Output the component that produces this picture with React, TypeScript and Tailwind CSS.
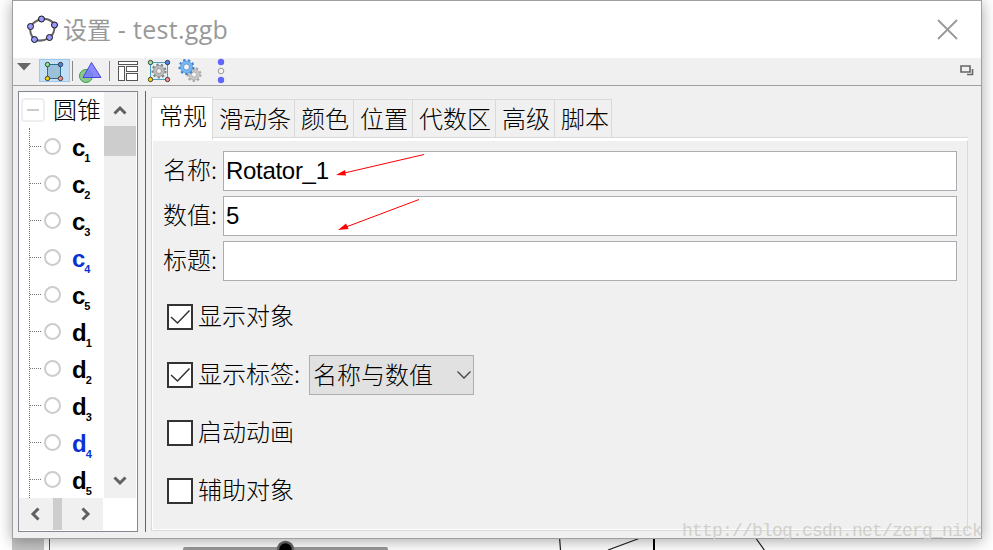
import React from 'react';

const treeItems = [
  { name: 'c', sub: '1' },
  { name: 'c', sub: '2' },
  { name: 'c', sub: '3' },
  { name: 'c', sub: '4', blue: true },
  { name: 'c', sub: '5' },
  { name: 'd', sub: '1' },
  { name: 'd', sub: '2' },
  { name: 'd', sub: '3' },
  { name: 'd', sub: '4', blue: true },
  { name: 'd', sub: '5' },
];

const tabs = [
  { label: '滑动条', width: 'w-[82px]' },
  { label: '颜色', width: 'w-[59px]' },
  { label: '位置', width: 'w-[59px]' },
  { label: '代数区', width: 'w-[83px]' },
  { label: '高级', width: 'w-[59px]' },
  { label: '脚本', width: 'w-[57px]' },
];

const fields = [
  { label: '名称', value: 'Rotator_1' },
  { label: '数值', value: '5' },
  { label: '标题', value: '' },
];

function Logo() {
  const points = [[16.5, 6], [29.5, 12], [24.5, 24.5], [9.5, 26.5], [5.5, 13.5]];
  return (
    <svg width="34" height="34" viewBox="0 0 34 34">
      <path d="M16.500 6Q26 5 29.500 12Q30 21 24.500 24.500Q17 29.500 9.500 26.500Q4 21 5.500 13.500Q9 8 16.500 6z" fill="none" stroke="#666" strokeWidth="2" />
      {points.map(([x, y]) => (
        <circle key={x} cx={x} cy={y} r="3" fill="#9999ff" stroke="#111" />
      ))}
    </svg>
  );
}

function Gear({ x, y, r, fill, stroke }: { x: number; y: number; r: number; fill: string; stroke: string }) {
  const step = (Math.PI * (r - 1)) / 9;
  return (
    <g>
      <circle cx={x} cy={y} r={r - 1} fill="none" stroke={stroke} strokeWidth="2" strokeDasharray={`${step} ${step}`} />
      <circle cx={x} cy={y} r={r - 2} fill={fill} stroke={stroke} strokeWidth="0.600" />
      <circle cx={x} cy={y} r={r - 5} fill="#f4f4f4" stroke={stroke} strokeWidth="0.700" />
    </g>
  );
}

function ToolbarIcons() {
  return (
    <svg width="217" height="27" viewBox="13 58 217 27">
      <path d="M17 63h14l-7 7.500z" fill="#666" />
      <rect x="39.500" y="59.500" width="30" height="22" fill="#c4dff5" stroke="#99caf0" />
      <rect x="47.500" y="64.500" width="13" height="14" fill="#9bc2d9" stroke="#2a6f94" />
      <g stroke="#333" strokeWidth="0.900">
        <circle cx="47.500" cy="64.500" r="2.200" fill="#8ee88e" />
        <circle cx="60.500" cy="64.500" r="2.200" fill="#4d84e8" />
        <circle cx="47.500" cy="78.500" r="2.200" fill="#ffd000" />
        <circle cx="60.500" cy="78.500" r="2.200" fill="#ff8c8c" />
      </g>
      <path d="M72.500 61v20M109.500 61v20" stroke="#888" />
      <circle cx="86" cy="76" r="6.500" fill="#8cc88c" stroke="#3c9a4c" />
      <path d="M91.500 62.500L101 77.500H83z" fill="#7878ff" fillOpacity="0.850" stroke="#4646e6" />
      <g fill="#fff" stroke="#555">
        <rect x="118.500" y="61.500" width="19" height="3" />
        <rect x="118.500" y="66.500" width="6" height="14" />
        <rect x="126.500" y="66.500" width="11" height="5" />
        <rect x="126.500" y="73.500" width="11" height="7" />
      </g>
      <rect x="150.500" y="62.500" width="17" height="17" fill="#e4f0f5" stroke="#4e9fc4" />
      <Gear x={159} y={71} r={7.500} fill="#bdbdbd" stroke="#808080" />
      <g stroke="#333" strokeWidth="0.900">
        <circle cx="150.500" cy="62.500" r="2.200" fill="#8ee88e" />
        <circle cx="167.500" cy="62.500" r="2.200" fill="#4d84e8" />
        <circle cx="150.500" cy="79.500" r="2.200" fill="#ffd000" />
        <circle cx="167.500" cy="79.500" r="2.200" fill="#ff8c8c" />
      </g>
      <Gear x={194} y={74.500} r={7.500} fill="#c8c8c8" stroke="#a4a4a4" />
      <Gear x={186.500} y={67} r={8} fill="#78b8f4" stroke="#3c82cc" />
      <circle cx="221" cy="62" r="3.200" fill="#6464ff" />
      <circle cx="221" cy="71" r="2.800" fill="#f4f4f4" stroke="#999" />
      <circle cx="221" cy="80" r="3.200" fill="#6464ff" />
    </svg>
  );
}

function Chevron({ d }: { d: string }) {
  return (
    <svg width="14" height="14" viewBox="0 0 14 14" fill="none" stroke="#606060" strokeWidth="3">
      <path d={d} />
    </svg>
  );
}

function Checkbox({ checked = false }: { checked?: boolean }) {
  return (
    <span className="mr-[5px] flex size-[26px] shrink-0 items-center justify-center border-2 border-[#333] bg-white">
      {checked && (
        <svg width="22" height="22" viewBox="0 0 22 22" fill="none" stroke="#333" strokeWidth="1.500">
          <path d="M2 11l6.500 6L20.500 4.500" />
        </svg>
      )}
    </span>
  );
}

// Part of the drawing pad that stays visible below the dialog
function CanvasBackground() {
  return (
    <svg className="absolute inset-0" width="993" height="550" viewBox="0 0 993 550">
      <rect x="12" y="530" width="32" height="20" fill="#c6c6c6" />
      <path d="M49.500 0v550" stroke="#555" />
      <rect x="183" y="547" width="205" height="8" rx="2" fill="#999" />
      <circle cx="285.500" cy="549.500" r="7.500" fill="#000" stroke="#666" strokeWidth="2.500" />
      <g stroke="#222" strokeWidth="1.200">
        <path d="M559.500 537l1 13M643 537l-35 13M755 537l10 14" />
        <path d="M654 537v13" stroke="#000" strokeWidth="2" />
      </g>
    </svg>
  );
}

function ObjectTree() {
  return (
    <div className="flex h-[441px] w-[120px] flex-col border border-[#828790] bg-white">
      <div className="flex h-[406px]">
        <div className="w-[85px] overflow-hidden">
          <div className="flex h-9 items-center pl-[2px]">
            <span className="flex size-6 items-center justify-center rounded border-2 border-[#eee]">
              <span className="h-[2px] w-3 bg-[#ccc]" />
            </span>
            <span className="-mt-[2px] ml-2 text-[24px] leading-9 whitespace-nowrap">圆锥</span>
          </div>
          <ul className="ml-[10px] h-[370px] border-l border-dotted border-[#777]">
            {treeItems.map((item) => (
              <li key={item.name + item.sub} className="flex h-[37px] items-center">
                <span className="w-[11px] border-t border-dotted border-[#777]" />
                <span className="ml-[3px] size-[17px] rounded-full border-2 border-[#ccc]" />
                <span
                  className={`mt-[2px] ml-[11px] font-['Liberation_Sans'] text-[24px] leading-[37px] font-bold ${item.blue ? 'text-[#0a32d2]' : 'text-black'}`}
                >
                  {item.name}
                  <span className="relative top-[6px] -left-px text-[11px] leading-none">{item.sub}</span>
                </span>
              </li>
            ))}
          </ul>
        </div>
        <div className="flex w-8 flex-col bg-[#f0f0f0]">
          <div className="flex h-[34px] items-center justify-center pt-1">
            <Chevron d="M1.500 9.500L7 4l5.500 5.500" />
          </div>
          <div className="h-[30px] bg-[#cdcdcd]" />
          <div className="mt-auto flex h-[34px] items-center justify-center pb-[2px]">
            <Chevron d="M1.500 4.500L7 10l5.500-5.500" />
          </div>
        </div>
      </div>
      <div className="flex h-8 w-[84px] items-center bg-[#f0f0f0]">
        <span className="flex w-[34px] justify-center"><Chevron d="M9.500 1.500L4 7l5.500 5.500" /></span>
        <span className="h-full w-[9px] bg-[#cdcdcd]" />
        <span className="ml-[6px] flex w-[34px] justify-center"><Chevron d="M4.500 1.500L10 7l-5.500 5.500" /></span>
      </div>
    </div>
  );
}

function BasicPanel() {
  return (
    <div className="h-[391px] border border-t-white border-r-[#d9d9d9] border-b-[#d9d9d9] border-l-[#d9d9d9] pt-[10px] pl-[11px] shadow-[inset_1px_-1px_0_#fff]">
      {fields.map((field) => (
        <div key={field.label} className="mb-[5px] flex h-10 items-center">
          <label className="-mt-1 w-[60px] whitespace-nowrap">{field.label}:</label>
          <div className="flex h-10 w-[734px] items-center border border-[#abadb3] bg-white pl-[2px] font-['Liberation_Sans'] font-normal tracking-[-0.3px]">
            {field.value}
          </div>
        </div>
      ))}
      <div className="mt-4 ml-1 flex flex-col">
        <div className="mb-[18px] flex h-10 items-center">
          <Checkbox checked />
          <span className="-mt-1">显示对象</span>
        </div>
        <div className="mb-[18px] flex h-10 items-center">
          <Checkbox checked />
          <span className="-mt-1 w-[111px]">显示标签:</span>
          <div className="flex h-10 w-[165px] items-center justify-between border border-[#adadad] bg-[#e1e1e1] pr-[2px] pl-[3px]">
            <span className="-mt-[3px]">名称与数值</span>
            <svg width="14" height="10" viewBox="0 0 14 10" fill="none" stroke="#444" strokeWidth="1.300">
              <path d="M0.500 1.500L7 8l6.500-6.500" />
            </svg>
          </div>
        </div>
        <div className="mb-[18px] flex h-10 items-center">
          <Checkbox />
          <span className="-mt-1">启动动画</span>
        </div>
        <div className="flex h-10 items-center">
          <Checkbox />
          <span className="-mt-1">辅助对象</span>
        </div>
      </div>
    </div>
  );
}

export default function App() {
  return (
    <div className="relative h-[550px] w-[993px] overflow-hidden bg-white pl-3 font-['Noto_Sans_CJK_SC',sans-serif] font-light text-black">
      <CanvasBackground />

      <div className="relative flex h-[539px] w-[970px] flex-col border border-[#a0a0a0] bg-[#f0f0f0] shadow-[0_2px_14px_rgba(0,0,0,0.35)]">
        <header className="flex h-[57px] items-center bg-white pr-[23px] pl-[12px] text-[24px] text-[#999]">
          <Logo />
          <h1 className="-mt-[2px] ml-1 flex-1 leading-9 font-normal whitespace-nowrap">
            设置<span className="font-['Open_Sans'] text-[25px] tracking-[0.3px]"> - test.ggb</span>
          </h1>
          <svg width="21" height="21" viewBox="0 0 21 21" stroke="#999" strokeWidth="1.800">
            <path d="M1 1l19 19M20 1L1 20" />
          </svg>
        </header>

        <div className="flex h-[28px] justify-between border-b border-[#a0a0a0] pr-[6px]">
          <ToolbarIcons />
          <svg className="mt-[6px]" width="16" height="14" viewBox="0 0 16 14" fill="none" stroke="#666" strokeWidth="1.600">
            <path d="M2 2h9v6H2zM13.500 5v5.500H8" />
          </svg>
        </div>

        <div className="flex pt-[5px] pl-[5px]">
          <ObjectTree />
          <div className="ml-[7px] h-[441px] w-px bg-[#646464]" />

          <section className="mt-[6px] ml-[5px] w-[817px] text-[24px] leading-9">
            <div className="flex h-[43px] items-start">
              <div className="h-[43px] w-[62px] border border-b-0 border-[#d9d9d9] bg-white pl-[7px] leading-[34px] whitespace-nowrap">常规</div>
              <div className="flex flex-1 flex-col">
                <div className="flex pt-[2px]">
                  {tabs.map((tab) => (
                    <div key={tab.label} className={`${tab.width} h-[38px] border-t border-r border-[#d9d9d9] pl-[6px] whitespace-nowrap`}>
                      {tab.label}
                    </div>
                  ))}
                </div>
                <div className="h-[3px] border-t border-[#d9d9d9] bg-white" />
              </div>
            </div>
            <BasicPanel />
          </section>
        </div>
      </div>

      {/* Red annotation arrows */}
      <svg className="absolute inset-0" width="993" height="550" viewBox="0 0 993 550" stroke="#f00" fill="#f00">
        <path d="M424 154.500L340 174M419 199.500L342 228.500" />
        <path d="M336 175l9-5 1 5.500zM338 230l8-6.500 2.500 5.500z" stroke="none" />
      </svg>
      <span className="absolute top-[519px] left-[682px] font-['Liberation_Mono'] text-[18px] leading-6 font-normal tracking-[-0.8px] text-[#d0d0ca]">
        http://blog.csdn.net/zerg_nick
      </span>
    </div>
  );
}
